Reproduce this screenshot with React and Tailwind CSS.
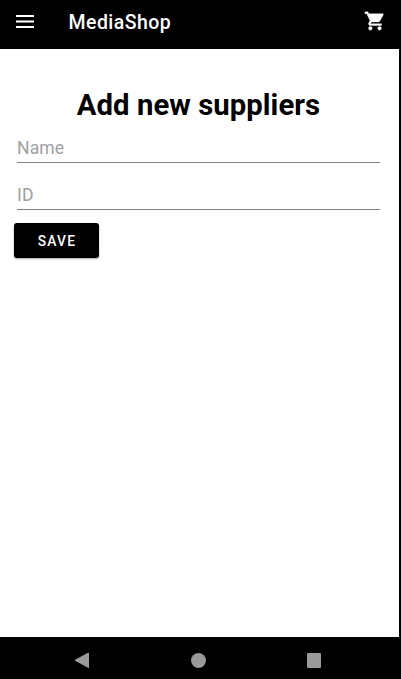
function Field({ label, className }) {
  return (
    <input
      type="text"
      placeholder={label}
      aria-label={label}
      className={`block w-[363px] rounded-none border-b border-[#828282] bg-transparent px-0 pt-px pb-0 text-[17.6px] tracking-[0.1px] text-black outline-none placeholder:text-[#a0a0a0] ${className}`}
    />
  );
}

export default function App() {
  return (
    <div className="flex h-[679px] w-[401px] flex-col bg-black font-['Roboto',sans-serif]">
      <header className="flex h-[49px] shrink-0 items-start text-white">
        <button aria-label="Menu" className="ml-4 mt-[15px]">
          <svg width="18" height="13" viewBox="0 0 18 13" fill="currentColor" className="block">
            <path d="M0 0h18v2H0zM0 5.4h18v2.2H0zM0 11h18v2H0z" />
          </svg>
        </button>
        <h1 className="ml-[34.5px] mt-[9px] text-[19.5px] leading-7 font-medium tracking-[0.45px]">MediaShop</h1>
        <button aria-label="Cart" className="mr-[15px] mt-2.5 ml-auto">
          <svg width="22" height="22" viewBox="0 0 24 24" fill="currentColor" stroke="currentColor" strokeWidth="0.4" className="block">
            <path d="M7 18c-1.100 0-1.990.9-1.990 2S5.900 22 7 22s2-.9 2-2-.9-2-2-2zM1 2v2h2l3.600 7.590-1.350 2.450c-.16.280-.25.610-.25.960 0 1.100.9 2 2 2h12v-2H7.420c-.14 0-.25-.11-.25-.25l.03-.12.900-1.630h7.450c.75 0 1.410-.41 1.750-1.030l3.580-6.490A1.003 1.003 0 0 0 20 4H5.210l-.94-2H1zm16 16c-1.100 0-1.990.9-1.990 2s.89 2 1.990 2 2-.9 2-2-.9-2-2-2z" />
          </svg>
        </button>
      </header>
      <main className="mr-0.5 flex-1 bg-white">
        <h2 className="pt-9 pr-0.5 text-center text-[29.3px] leading-10 font-bold tracking-[0.05px] text-black">Add new suppliers</h2>
        <form className="flex flex-col items-start">
          <Field label="Name" className="ml-[17px] mt-[7px] h-[31px]" />
          <Field label="ID" className="ml-[17px] mt-4 h-[31px] border-[#8e8e8e]" />
          <button
            type="button"
            className="ml-3.5 mt-[13px] h-[35px] w-[85px] rounded-[3px] bg-black pt-0.5 pl-px text-[13.8px] font-medium tracking-[1.2px] text-white shadow-[0_1px_2px_rgba(0,0,0,0.35)]"
          >
            SAVE
          </button>
        </form>
      </main>
      <nav className="flex h-[42px] shrink-0 items-start pt-[15px] pl-[75px] text-[#9a9a9a]">
        <svg width="15" height="17" viewBox="0 0 15 17" fill="currentColor">
          <path d="M0 7.700 13 .8q1-.3 1 .7v13.700q0 1-1 .6L0 8.700q-.5-.5 0-1z" />
        </svg>
        <span className="mt-px ml-[101px] h-[15px] w-[15px] rounded-full bg-[#9a9a9a]" />
        <span className="mt-px ml-[101px] h-[15px] w-[14px] rounded-[1px] bg-[#9a9a9a]" />
      </nav>
    </div>
  );
}
